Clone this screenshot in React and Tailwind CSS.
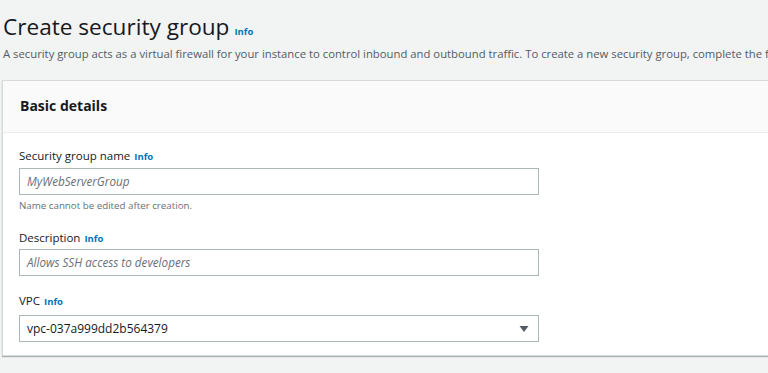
export default function App() {
  const font = { fontFamily: '"Open Sans", "Noto Sans", sans-serif' };
  const Info = () => (
    <span className="text-[9.5px] font-bold text-[#0073bb] ml-[4px]">Info</span>
  );
  return (
    <div className="w-[768px] h-[373px] overflow-hidden bg-[#f2f3f3] text-[#16191f]" style={font}>
      <div className="pl-[3px] pt-[10px]">
        <div className="flex items-baseline">
          <h1 className="text-[22.6px] leading-[34px] font-normal text-[#16191f]">Create security group</h1>
          <span className="text-[9.5px] font-bold text-[#0073bb] ml-[5px]">Info</span>
        </div>
        <p className="text-[11.3px] leading-[18px] text-[#545b64] mt-[1px] whitespace-nowrap">
          A security group acts as a virtual firewall for your instance to control inbound and outbound traffic. To create a new security group, complete the fields below.
        </p>
      </div>
      <div className="ml-[2px] mt-[17px] w-[800px] bg-white border border-[#d5dbdb] shadow-[0_1px_1px_rgba(0,28,36,0.3)]">
        <div className="h-[52px] bg-[#fafafa] border-b border-[#eaeded] flex items-center px-[17px]">
          <h2 className="text-[14px] font-bold text-[#16191f] -mt-[2px]">Basic details</h2>
        </div>
        <div className="px-[16px] pt-[14px] pb-[13px] flex flex-col">
          <label className="text-[11.5px] leading-[18px] text-[#16191f]">
            Security group name<Info />
          </label>
          <div className="mt-[2px] w-[520px] h-[27px] border border-[#aab7b8] bg-white flex items-center px-[7px]">
            <span className="text-[11.7px] italic text-[#687078]">MyWebServerGroup</span>
          </div>
          <p className="mt-[4px] text-[9.75px] leading-[14px] text-[#687078]">Name cannot be edited after creation.</p>
          <label className="mt-[16px] text-[11.5px] leading-[18px] text-[#16191f]">
            Description<Info />
          </label>
          <div className="mt-[1px] w-[520px] h-[27px] border border-[#aab7b8] bg-white flex items-center px-[7px]">
            <span className="text-[11.7px] italic text-[#687078]">Allows SSH access to developers</span>
          </div>
          <label className="mt-[16px] text-[11.5px] leading-[18px] text-[#16191f]">
            VPC<Info />
          </label>
          <div className="mt-[4px] w-[520px] h-[27px] border border-[#aab7b8] bg-white flex items-center justify-between pl-[7px] pr-[9px]">
            <span className="text-[12px] text-[#16191f]">vpc-037a999dd2b564379</span>
            <svg width="10" height="8" viewBox="0 0 10 8">
              <path d="M0.5 1 L9.5 1 L5 7 Z" fill="#545b64" />
            </svg>
          </div>
        </div>
      </div>
    </div>
  );
}
